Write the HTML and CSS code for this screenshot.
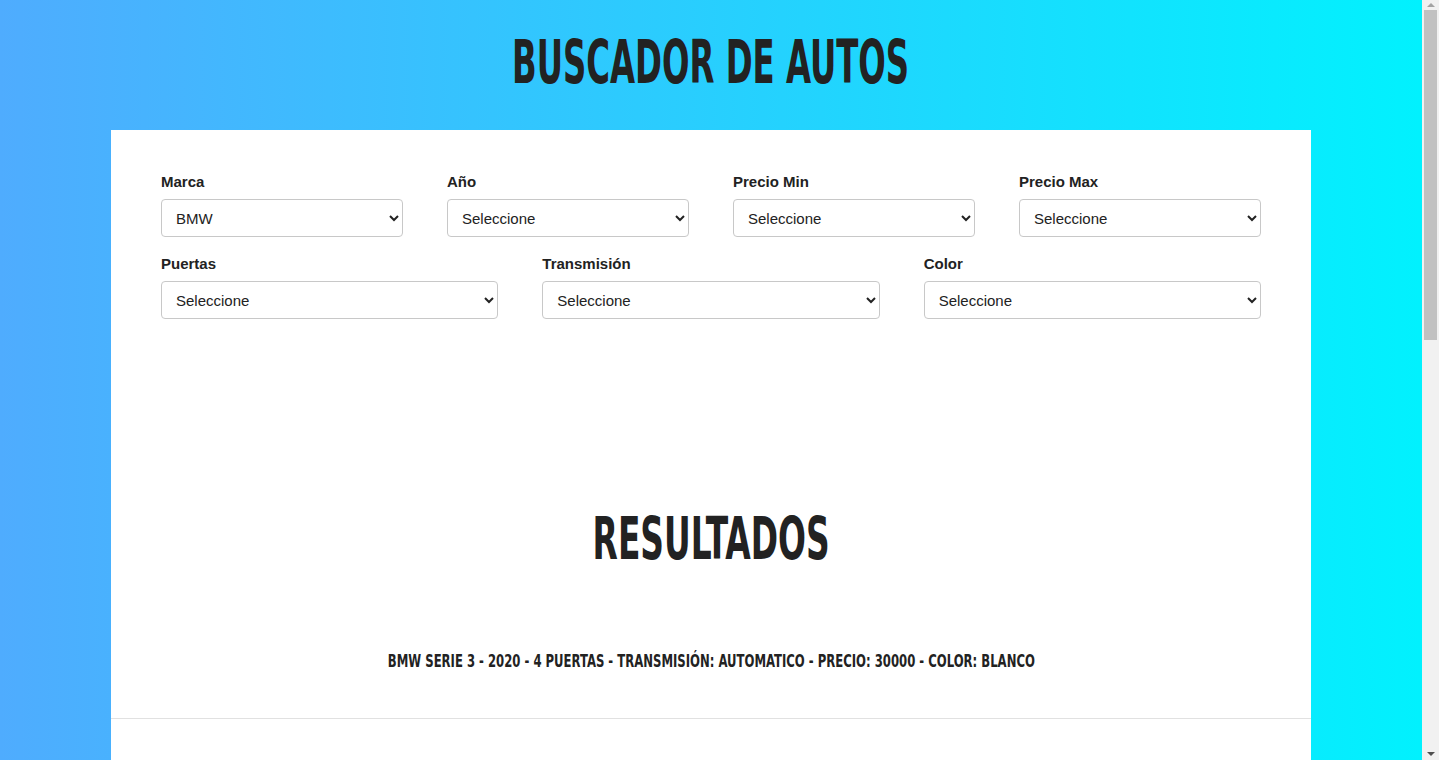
FILE: index.html
```html
<!DOCTYPE html>
<html lang="es">
<head>
  <meta charset="UTF-8" />
  <meta name="viewport" content="width=device-width, initial-scale=1" />
  <title>Buscador de Autos</title>
  <link rel="stylesheet" href="styles.css">
</head>
<body>
  <header class="header">
    <h1 class="title"><span>Buscador de autos</span></h1>
  </header>

  <main class="contenedor">
    <form class="buscador">
      <div class="fila fila-4">
        <div class="campo">
          <label for="marca">Marca</label>
          <select id="marca">
            <option>BMW</option>
          </select>
        </div>
        <div class="campo">
          <label for="year">Año</label>
          <select id="year"><option>Seleccione</option></select>
        </div>
        <div class="campo">
          <label for="minimo">Precio Min</label>
          <select id="minimo"><option>Seleccione</option></select>
        </div>
        <div class="campo">
          <label for="maximo">Precio Max</label>
          <select id="maximo"><option>Seleccione</option></select>
        </div>
      </div>
      <div class="fila fila-3">
        <div class="campo">
          <label for="puertas">Puertas</label>
          <select id="puertas"><option>Seleccione</option></select>
        </div>
        <div class="campo">
          <label for="transmision">Transmisión</label>
          <select id="transmision"><option>Seleccione</option></select>
        </div>
        <div class="campo">
          <label for="color">Color</label>
          <select id="color"><option>Seleccione</option></select>
        </div>
      </div>
    </form>

    <h2 class="resultados-titulo"><span>Resultados</span></h2>

    <div id="resultado" class="resultado">
      <p><span>BMW Serie 3 - 2020 - 4 Puertas - Transmisión: automatico - Precio: 30000 - Color: Blanco</span></p>
    </div>
  </main>

  <!-- window scrollbar, drawn since the capture hides the real one -->
  <div class="scrollbar">
    <span class="flecha arriba"></span>
    <span class="barra"></span>
    <span class="flecha abajo"></span>
  </div>
</body>
</html>
```

FILE: styles.css
```css
html {
  box-sizing: border-box;
}
*, *:before, *:after {
  box-sizing: inherit;
}
body {
  margin: 0 17px 0 0;
  font-family: "Liberation Sans", Arial, sans-serif;
  background: linear-gradient(to right, #4facfe 0%, #00f2fe 100%);
  color: #222;
  min-height: 1670px;
}
.header {
  padding: 28px 0 35px;
  text-align: center;
}
.title,
.resultados-titulo {
  margin: 0;
  font-family: "DejaVu Sans Condensed", "DejaVu Sans", sans-serif;
  font-stretch: condensed;
  font-weight: bold;
  text-transform: uppercase;
  color: #222;
  text-align: center;
  line-height: 1.1;
}
.title {
  font-size: 61px;
}
.title span,
.resultados-titulo span,
.resultado span {
  display: inline-block;
  transform: scaleX(0.59);
}
.contenedor {
  width: 1200px;
  margin: 0 auto;
  background: #fff;
  min-height: 1540px;
}
.buscador {
  padding: 43px 50px 0;
}
.fila {
  display: grid;
  column-gap: 44px;
  margin-bottom: 18px;
}
.fila-4 {
  grid-template-columns: repeat(4, 1fr);
}
.fila-3 {
  grid-template-columns: repeat(3, 1fr);
}
.campo label {
  display: block;
  font-size: 15px;
  font-weight: bold;
  margin-bottom: 9px;
  color: #222;
}
.campo select {
  width: 100%;
  height: 38px;
  padding: 0 10px;
  font-family: "Liberation Sans", Arial, sans-serif;
  font-size: 15px;
  color: #222;
  background: #fff;
  border: 1px solid #c8c8c8;
  border-radius: 4px;
}
.resultados-titulo {
  margin-top: 189px;
  font-size: 58px;
}
.resultados-titulo span {
  transform: scaleX(0.63);
}
.resultado {
  margin-top: 78px;
  border-bottom: 1px solid #e1e1e1;
}
.resultado p {
  margin: 0;
  padding-bottom: 47px;
  text-align: center;
  font-family: "DejaVu Sans Condensed", "DejaVu Sans", sans-serif;
  font-stretch: condensed;
  font-weight: bold;
  text-transform: uppercase;
  font-size: 18px;
  white-space: nowrap;
}
.resultado span {
  transform: scaleX(0.72);
}

.scrollbar {
  position: fixed;
  top: 0;
  right: 0;
  width: 17px;
  height: 100%;
  background: #f1f1f1;
  display: flex;
  flex-direction: column;
  align-items: center;
}
.barra {
  width: 13px;
  height: 330px;
  background: #c1c1c1;
}
.flecha {
  width: 0;
  height: 0;
  border-left: 4px solid transparent;
  border-right: 4px solid transparent;
}
.arriba {
  margin: 3px 0 3px;
  border-bottom: 4px solid #a3a3a3;
}
.abajo {
  margin-top: auto;
  margin-bottom: 4px;
  border-top: 4px solid #505050;
}
```
